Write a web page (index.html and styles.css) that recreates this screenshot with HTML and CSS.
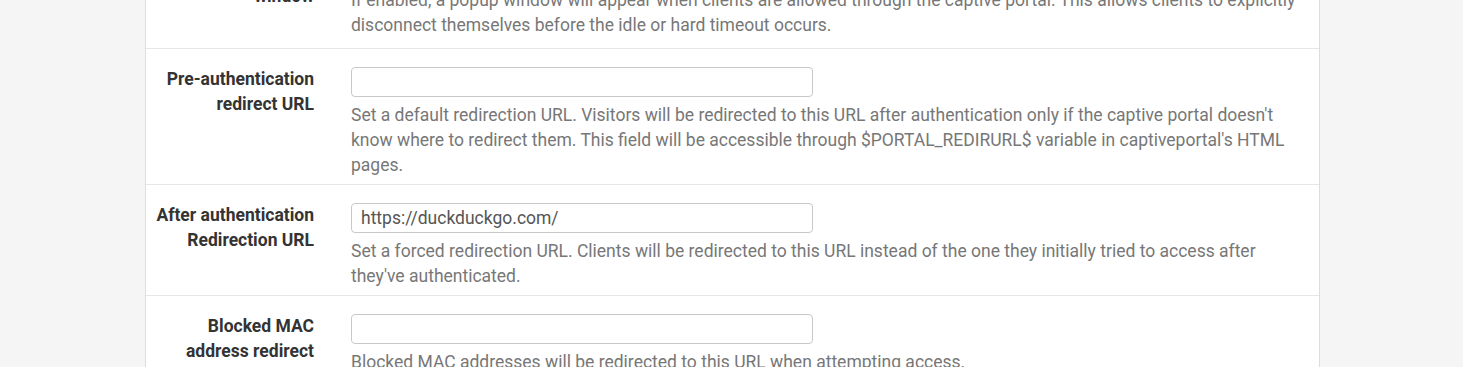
FILE: index.html
```html
<!DOCTYPE html>
<html>
<head>
  <link rel="stylesheet" href="styles.css">
</head>
<body>
  <div class="panel">

    <!-- Logout popup -->
    <div class="form-row first-row">
      <span class="form-label">Logout popup window</span>
      <div class="form-field">
        <label class="check-line"><input type="checkbox"> Enable logout popup window</label>
        <span class="help-text help-flush">If enabled, a popup window will appear when clients are allowed through the captive portal. This allows clients to explicitly disconnect themselves before the idle or hard timeout occurs.</span>
      </div>
    </div>

    <!-- Pre-auth redirect -->
    <div class="form-row">
      <span class="form-label">Pre-authentication redirect URL</span>
      <div class="form-field">
        <input type="text" class="text-input">
        <span class="help-text">Set a default redirection URL. Visitors will be redirected to this URL after authentication only if the captive portal doesn't know where to redirect them. This field will be accessible through $PORTAL_REDIRURL$ variable in captiveportal's HTML pages.</span>
      </div>
    </div>

    <!-- After auth redirect -->
    <div class="form-row">
      <span class="form-label">After authentication Redirection URL</span>
      <div class="form-field">
        <input type="text" class="text-input" value="https://duckduckgo.com/">
        <span class="help-text">Set a forced redirection URL. Clients will be redirected to this URL instead of the one they initially tried to access after they've authenticated.</span>
      </div>
    </div>

    <!-- Blocked MAC redirect -->
    <div class="form-row">
      <span class="form-label">Blocked MAC address redirect</span>
      <div class="form-field">
        <input type="text" class="text-input">
        <span class="help-text">Blocked MAC addresses will be redirected to this URL when attempting access.</span>
      </div>
    </div>

  </div>
</body>
</html>
```

FILE: styles.css
```css
body {
  margin: 0;
  background-color: #f5f5f5;
  font-family: Roboto, 'Liberation Sans', Arial, sans-serif;
  font-size: 17.5px;
  line-height: 25px;
  color: #333;
}
/* page is scrolled down a bit: the first row is cut at the top */
.panel {
  width: 1175px;
  box-sizing: border-box;
  margin: -55px 0 0 145px;
  background: white;
  border: 1px solid #dddddd;
  border-top: none;
}
.form-row {
  display: flex;
  align-items: flex-start;
  gap: 37px;
  padding: 18px 14px 6px 0;
  border-top: 1px solid #e6e6e6;
}
.first-row {
  padding-bottom: 10px;
  border-top: none;
}
.first-row .form-label {
  margin-top: -4px;
}
.form-label {
  width: 162px;
  margin-left: 6px;
  flex-shrink: 0;
  text-align: right;
  font-weight: 700;
  color: #333;
}
.form-field {
  width: 954px;
  display: flex;
  flex-direction: column;
  align-items: flex-start;
}
.check-line {
  display: flex;
  align-items: center;
  gap: 6px;
}
.text-input {
  width: 462px;
  height: 30px;
  box-sizing: border-box;
  padding: 0 9px;
  border: 1px solid #c8c8c8;
  border-radius: 4px;
  font-family: Roboto, 'Liberation Sans', Arial, sans-serif;
  font-size: 17.5px;
  color: #555;
  outline: none;
}
.help-text {
  display: block;
  margin-top: 6px;
  color: #777;
}
.help-flush {
  margin-top: 0;
}
```
